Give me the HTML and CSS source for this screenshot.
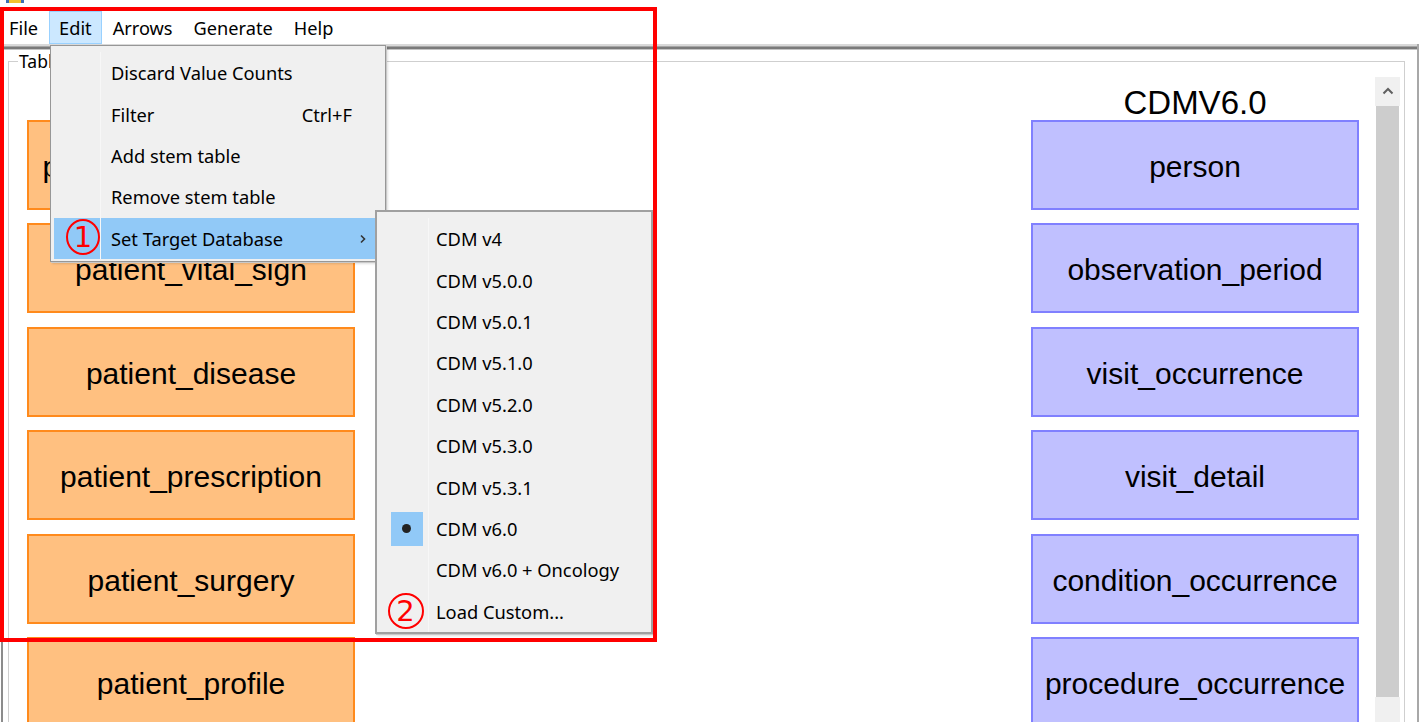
FILE: index.html
```html
<!DOCTYPE html>
<html>
<head>
<meta charset="utf-8">
<link rel="stylesheet" href="styles.css">
</head>
<body>
<div class="titlebar"><span class="appicon"></span></div>
<nav class="menubar">
  <span class="mitem">File</span>
  <span class="mitem active">Edit</span>
  <span class="mitem">Arrows</span>
  <span class="mitem">Generate</span>
  <span class="mitem">Help</span>
</nav>
<div class="window">
  <div class="sep"></div>
  <fieldset class="tables">
    <legend>Tables</legend>
    <div class="scrollpane">
      <div class="canvas">
        <div class="col">
          <div class="coltitle"></div>
          <div class="box src">patient_hospitalization</div>
          <div class="box src">patient_vital_sign</div>
          <div class="box src">patient_disease</div>
          <div class="box src">patient_prescription</div>
          <div class="box src">patient_surgery</div>
          <div class="box src">patient_profile</div>
        </div>
        <div class="col">
          <div class="coltitle">CDMV6.0</div>
          <div class="box tgt">person</div>
          <div class="box tgt">observation_period</div>
          <div class="box tgt">visit_occurrence</div>
          <div class="box tgt">visit_detail</div>
          <div class="box tgt">condition_occurrence</div>
          <div class="box tgt">procedure_occurrence</div>
        </div>
      </div>
      <div class="vscroll">
        <div class="sbtn"><svg width="12" height="8" viewBox="0 0 12 8"><polyline points="1.5,6.5 6,2 10.5,6.5" fill="none" stroke="#606060" stroke-width="2"/></svg></div>
        <div class="thumb"></div>
        <div class="track"></div>
      </div>
    </div>
  </fieldset>
</div>

<div class="menu edit-menu">
  <div class="item"><span class="gut"></span><span class="label">Discard Value Counts</span></div>
  <div class="item"><span class="gut"></span><span class="label">Filter</span><span class="accel">Ctrl+F</span></div>
  <div class="item"><span class="gut"></span><span class="label">Add stem table</span></div>
  <div class="item"><span class="gut"></span><span class="label">Remove stem table</span></div>
  <div class="item hot"><span class="gut"><span class="mark">1</span></span><span class="label">Set Target Database</span>
    <svg class="arrow" width="8" height="10" viewBox="0 0 8 10"><polyline points="2,1.5 5.5,5 2,8.5" fill="none" stroke="#333" stroke-width="1.6"/></svg></div>
</div>

<div class="menu sub-menu">
  <div class="item"><span class="gut"></span><span class="label">CDM v4</span></div>
  <div class="item"><span class="gut"></span><span class="label">CDM v5.0.0</span></div>
  <div class="item"><span class="gut"></span><span class="label">CDM v5.0.1</span></div>
  <div class="item"><span class="gut"></span><span class="label">CDM v5.1.0</span></div>
  <div class="item"><span class="gut"></span><span class="label">CDM v5.2.0</span></div>
  <div class="item"><span class="gut"></span><span class="label">CDM v5.3.0</span></div>
  <div class="item"><span class="gut"></span><span class="label">CDM v5.3.1</span></div>
  <div class="item"><span class="gut"><span class="radio"><span class="dot"></span></span></span><span class="label">CDM v6.0</span></div>
  <div class="item"><span class="gut"></span><span class="label">CDM v6.0 + Oncology</span></div>
  <div class="item"><span class="gut"><span class="mark">2</span></span><span class="label">Load Custom...</span></div>
</div>

<div class="annot"></div>
</body>
</html>
```

FILE: styles.css
```css
* { box-sizing: border-box; }
html, body {
  margin: 0;
  padding: 0;
}
body {
  width: 1423px;
  height: 722px;
  overflow: hidden;
  background: #ffffff;
  position: relative;
  font-family: "Noto Sans", "Open Sans", sans-serif;
  color: #000;
}

.titlebar {
  height: 11px;
  padding-left: 6px;
}
.appicon {
  display: block;
  width: 18px;
  height: 3px;
  background: linear-gradient(90deg, #3b6fb5 0 3px, #f2c230 3px 15px, #3b6fb5 15px);
}

.menubar {
  height: 33px;
  display: flex;
  align-items: stretch;
  font-size: 18.2px;
}
.mitem {
  display: flex;
  align-items: center;
  padding: 0 9.5px;
  border: 1px solid transparent;
}
.mitem:first-child { padding-left: 8px; }
.mitem.active {
  background: #cce8ff;
  border-color: #99d1ff;
}

.window {
  height: 678px;
  border-left: 2px solid #8c8c8c;
  border-right: 2px solid #a8a8a8;
  width: 1418px;
  margin-left: 1px;
}
.sep {
  height: 6px;
  background: linear-gradient(180deg, #d9d9d9 0 2px, #a6a6a6 2px 3px, #7a7a7a 3px 5px, #c4c4c4 5px 6px);
}

.tables {
  margin: 0 0 0 5px;
  width: 1397px;
  height: 700px;
  border: 1px solid #cfcfcf;
  padding: 5px 4px 0 2px;
  min-width: 0;
}
.tables legend {
  font-size: 17.5px;
  line-height: 22px;
  padding: 0 1px;
  margin-left: 7px;
}

.scrollpane {
  display: flex;
  height: 660px;
}
.canvas {
  flex: 1;
  display: flex;
  justify-content: space-between;
  padding: 0 16px 0 16px;
  font-family: "Liberation Sans", Arial, sans-serif;
}
.col {
  width: 328px;
  display: flex;
  flex-direction: column;
  gap: 13.4px;
}
.coltitle {
  height: 38px;
  line-height: 38px;
  margin-top: 1px;
  margin-bottom: -9.4px;
  padding-top: 6px;
  text-align: center;
  font-size: 33px;
}
.box {
  height: 90px;
  flex: none;
  display: flex;
  align-items: center;
  justify-content: center;
  font-size: 30px;
  border: 2px solid;
  padding-top: 4px;
}
.box.src {
  background: #ffc080;
  border-color: #ff8a1c;
}
.box.tgt {
  background: #c0c0ff;
  border-color: #8080ff;
}

.vscroll {
  width: 25px;
  display: flex;
  flex-direction: column;
}
.sbtn {
  height: 29px;
  background: #f0f0f0;
  display: flex;
  align-items: center;
  justify-content: center;
  padding-bottom: 1px;
}
.thumb {
  height: 591px;
  background: #cdcdcd;
  margin: 0 1px;
}
.track {
  flex: 1;
  background: #f0f0f0;
}

/* popup menus (overlay) */
.menu {
  position: absolute;
  background: #f0f0f0;
  border: 1px solid #979797;
  box-shadow: 1px 1px 0 #c9c9c9, 2px 2px 2px rgba(0,0,0,0.12);
  font-size: 18.3px;
  display: flex;
  flex-direction: column;
}
.item {
  display: flex;
  align-items: center;
  height: 41.5px;
  position: relative;
}
.gut {
  display: flex;
  align-items: center;
  justify-content: center;
  flex: none;
  height: 100%;
  border-right: 1px solid #f7f7f7;
}
.label { white-space: nowrap; }

.edit-menu {
  left: 50px;
  top: 45px;
  width: 336px;
  height: 217px;
  padding: 6px 2px 2px 3px;
}
.edit-menu .gut { width: 47px; margin-right: 10px; }
.edit-menu .item.hot { background: #91c9f7; }
.accel {
  margin-left: auto;
  margin-right: 31px;
}
.arrow {
  position: absolute;
  right: 16px;
  top: 16px;
}

.sub-menu {
  left: 375px;
  top: 210px;
  width: 278px;
  height: 424px;
  border: 2px solid #a0a0a0;
  padding: 6px 2px 0 2px;
}
.sub-menu .gut { width: 50px; margin-right: 7px; }
.radio {
  width: 32px;
  height: 34px;
  margin-left: 6px;
  background: #91c9f7;
  display: flex;
  align-items: center;
  justify-content: center;
}
.dot {
  width: 9px;
  height: 9px;
  border-radius: 50%;
  background: #222;
}

.mark {
  width: 36px;
  height: 36px;
  border: 2px solid #ff0000;
  border-radius: 50%;
  color: #ff0000;
  font-family: "DejaVu Sans", sans-serif;
  font-size: 29px;
  line-height: 32px;
  text-align: center;
}
.edit-menu .mark { margin-left: 12px; margin-top: -3px; }
.sub-menu .mark { margin-left: 4px; margin-top: -1px; }

.annot {
  position: absolute;
  left: 0;
  top: 7px;
  width: 657px;
  height: 635px;
  border: 4px solid #ff0000;
  pointer-events: none;
}
```
